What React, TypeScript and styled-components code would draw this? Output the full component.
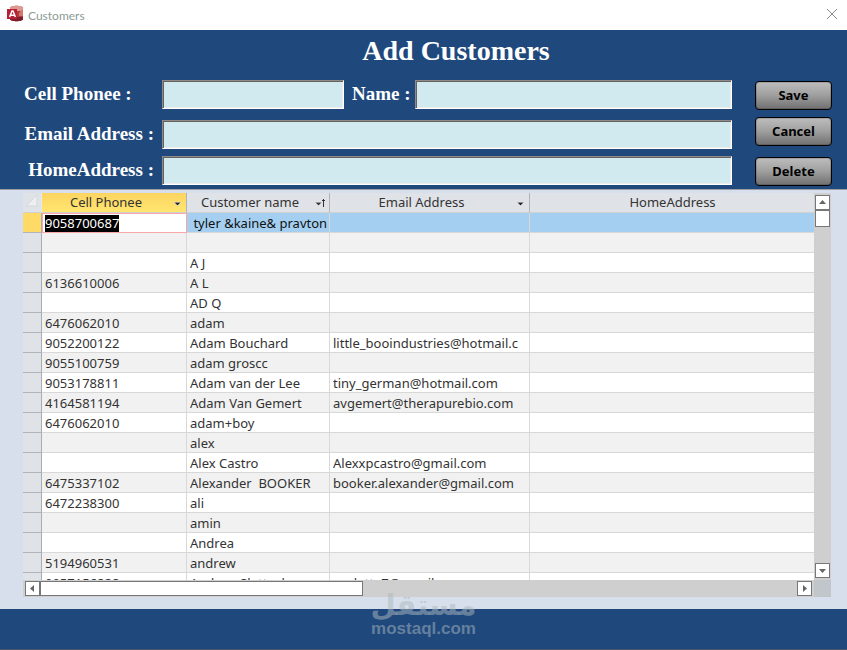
import React from "react";
import styled, { createGlobalStyle, css } from "styled-components";

const navy = "#1f497d";
const uiFont = '"Noto Sans", "Open Sans", sans-serif';
const serifFont = '"Liberation Serif", "Times New Roman", serif';

const GlobalStyle = createGlobalStyle`
  * { box-sizing: border-box; }
  body { margin: 0; background: #fff; font-family: ${uiFont}; }
  button, input { font: inherit; margin: 0; }
`;

const Window = styled.div`
  position: relative;
  display: flex;
  flex-direction: column;
  height: 100vh;
  overflow: hidden;
`;

const TitleBar = styled.div`
  display: flex;
  align-items: center;
  gap: 4px;
  flex: 0 0 30px;
  padding: 0 9px 2px 6px;
  background: #fff;
  color: #8d9a94;
  font-family: Lato, ${uiFont};
  font-size: 12px;
`;

const WindowTitle = styled.span`
  flex: 1;
  padding-top: 2px;
`;

const CloseButton = styled.button`
  display: flex;
  padding: 0;
  border: 0;
  background: none;
`;

const FormHeader = styled.form`
  flex: none;
  padding: 0 15px 3px 24px;
  background: ${navy};
  color: #fff;
  font-family: ${serifFont};
  font-weight: bold;
`;

const Heading = styled.h1`
  margin: 0;
  padding: 4px 0 12px 56px;
  font-size: 28px;
  line-height: 34px;
  text-align: center;
`;

const FormBody = styled.div`
  display: flex;
  gap: 23px;
`;

const Fields = styled.div`
  flex: 1;
  display: grid;
  grid-template-columns: 130px 1fr;
  grid-template-rows: 29px 40px 36px;
  column-gap: 8px;
  align-items: end;
`;

const Label = styled.label<{ $end?: boolean }>`
  padding-bottom: 2px;
  font-size: 19px;
  line-height: 27px;
  white-space: nowrap;
  text-align: ${(p) => (p.$end ? "right" : "left")};
`;

const FieldPair = styled.div`
  display: grid;
  grid-template-columns: 182px auto minmax(0, 1fr);
  align-items: end;
  column-gap: 4px;
`;

const NameLabel = styled(Label)`
  padding-left: 4px;
`;

const TextField = styled.input`
  width: 100%;
  height: 29px;
  padding: 0 4px;
  border: 1px solid;
  border-color: #8f8b88 #fff #fff #8f8b88;
  border-radius: 0;
  outline: 0;
  background: #d1eaf0;
  box-shadow: inset 1px 1px 0 #66625f, inset -1px -1px 0 #eeecea;
  font-family: ${uiFont};
  font-size: 13px;
`;

const Actions = styled.div`
  display: grid;
  grid-template-rows: 29px 36px 40px;
  align-items: end;
  flex: 0 0 77px;
  padding-top: 1px;
`;

const ActionButton = styled.button`
  height: 29px;
  padding: 0 0 2px;
  border: 1px solid #000;
  border-radius: 4px;
  background: linear-gradient(#bdbdbd, #a2a2a2 45%, #707070);
  box-shadow: inset 0 0 0 1px rgba(0, 0, 0, 0.15);
  color: #000;
  font-family: ${uiFont};
  font-size: 13px;
  font-weight: bold;
`;

const Detail = styled.main`
  flex: 1;
  min-height: 0;
  display: grid;
  grid-template-columns: minmax(0, 1fr) 17px;
  grid-template-rows: minmax(0, 1fr) 17px;
  padding: 3px 16px 12px 23px;
  border-top: 1px solid #9c9ea3;
  background: #d6dfeb;
`;

const SheetView = styled.div`
  overflow: hidden;
  background: #fff;
`;

const Sheet = styled.table`
  width: 100%;
  table-layout: fixed;
  border-collapse: separate;
  border-spacing: 0;
  color: #333;
  font-size: 13px;
`;

const Column = styled.col<{ $width?: number }>`
  width: ${(p) => (p.$width ? `${p.$width}px` : "auto")};
`;

const HeadCell = styled.th<{ $active?: boolean }>`
  height: 20px;
  padding: 0 3px 0 4px;
  border-right: 1px solid #b0b4b8;
  border-bottom: 1px solid #d0d0d0;
  background: ${(p) => (p.$active ? "linear-gradient(#fcd462, #ffe670)" : "#dfe2e7")};
  font-weight: normal;
  line-height: 19px;

  &:last-child {
    border-right: 0;
  }
`;

const CornerCell = styled(HeadCell)`
  border-right: 1px solid #e6e9ee;
  padding: 0 3px 0 0;
`;

const HeadContent = styled.div`
  display: flex;
  align-items: center;
  gap: 6px;
`;

const HeadText = styled.span`
  flex: 1;
  white-space: nowrap;
`;

const MenuButton = styled.button`
  display: flex;
  padding: 0;
  border: 0;
  background: none;
`;

const RowHead = styled.th<{ $active?: boolean }>`
  padding: 0;
  border-right: 1px solid #a8adb2;
  border-bottom: 1px solid #b0b4b8;
  background: ${(p) => (p.$active ? "#ffda66" : "#dfe2e7")};
`;

const Cell = styled.td<{ $editing?: boolean }>`
  height: 20px;
  padding: 0 1px 0 3px;
  border-right: 1px solid #d8d8d8;
  border-bottom: 1px solid #d8d8d8;

  &:last-child {
    border-right: 0;
  }

  ${(p) =>
    p.$editing &&
    css`
      background: #fff;
      border-color: #f9a7ab;
      box-shadow: inset 1px 1px 0 #f9a7ab;
    `}
`;

const CellText = styled.div`
  height: 19px;
  padding-top: 2px;
  overflow: hidden;
  line-height: 17px;
  white-space: pre;
`;

const Row = styled.tr<{ $active?: boolean }>`
  background: #fff;
  color: ${(p) => (p.$active ? "#111" : "#333")};

  &:nth-child(even) {
    background: #f1f1f1;
  }

  ${(p) =>
    p.$active &&
    css`
      background: #a5cff0;
    `}
`;

const Selection = styled.span`
  display: inline-block;
  background: #000;
  color: #fff;
`;

const ScrollTrack = styled.div<{ $vertical?: boolean }>`
  display: flex;
  flex-direction: ${(p) => (p.$vertical ? "column" : "row")};
  padding: ${(p) => (p.$vertical ? "2px 1px" : "1px 2px")};
  background: #cfcfcf;
`;

const ArrowButton = styled.button`
  display: flex;
  align-items: center;
  justify-content: center;
  flex: none;
  width: 15px;
  height: 15px;
  padding: 0;
  border: 1px solid #777;
  background: #fff;
`;

const ScrollThumb = styled.div<{ $vertical?: boolean }>`
  flex: ${(p) => (p.$vertical ? "0 0 17px" : "0 0 41%")};
  border: 1px solid #777;
  background: #fff;
`;

const Spacer = styled.div`
  flex: 1;
`;

const ScrollCorner = styled.div`
  background: #c0c6ca;
`;

const FormFooter = styled.footer`
  flex: 0 0 41px;
  border-bottom: 1px solid #4a5568;
  background: ${navy};
`;

const Watermark = styled.div`
  position: absolute;
  bottom: 11px;
  left: 50%;
  transform: translateX(-50%);
  display: flex;
  flex-direction: column;
  align-items: center;
  color: rgba(173, 184, 190, 0.5);
  font-family: "Liberation Sans", Arial, sans-serif;
  font-size: 17px;
  font-weight: bold;
  line-height: 20px;
  pointer-events: none;
`;

const WatermarkLogo = styled.span`
  font-family: "DejaVu Sans", sans-serif;
  font-size: 29px;
  line-height: 28px;
`;

const AccessIcon = () => (
  <svg width="18" height="18" viewBox="0 0 18 18" aria-hidden="true">
    <path d="M4 3c0-3 13-3 13 0v11c0 3-13 3-13 0z" fill="#b53a3f" />
    <path d="M4 3c0-3 13-3 13 0v3H4z" fill="#dc9a92" />
    <path d="M13 8l4-4v7h-4z" fill="#cf7a68" />
    <path d="M4 12h13v2c0 3-13 3-13 0z" fill="#7b1f2b" />
    <rect x="1" y="4" width="10" height="10" fill="#b71f33" />
    <path d="M3.6 12 6 6h1l2.4 6M4.6 10.2h3.8" stroke="#fff" strokeWidth="1.5" fill="none" />
  </svg>
);

const CloseIcon = () => (
  <svg width="12" height="12" viewBox="0 0 12 12" aria-hidden="true">
    <path d="M1 1l10 10M11 1L1 11" stroke="#888" strokeWidth="1" />
  </svg>
);

const DropArrow = ({ sorted = false }: { sorted?: boolean }) => (
  <svg width="11" height="10" viewBox="0 0 11 10" shapeRendering="crispEdges" aria-hidden="true">
    {sorted ? (
      <>
        <path d="M0 4h7l-3.5 4z" fill="#333" stroke="#fff" strokeWidth="0.5" />
        <path d="M8 1h1v8H8zM7 2h3v1H7z" fill="#333" />
      </>
    ) : (
      <path d="M2 4h7l-3.5 4z" fill="#222" stroke="#fff" strokeWidth="0.5" />
    )}
  </svg>
);

const arrowPaths = {
  up: "M1 6h7L4.5 2z",
  down: "M1 3h7L4.5 7z",
  left: "M6 1v7L2 4.5z",
  right: "M3 1v7l4-3.5z",
};

const ScrollArrow = ({ dir }: { dir: keyof typeof arrowPaths }) => (
  <ArrowButton type="button" aria-label={`Scroll ${dir}`}>
    <svg width="9" height="9" viewBox="0 0 9 9" aria-hidden="true">
      <path d={arrowPaths[dir]} fill="#666" />
    </svg>
  </ArrowButton>
);

const customers: [string, string, string][] = [
  ["9058700687", " tyler &kaine& pravton", ""],
  ["", "", ""],
  ["", "A J", ""],
  ["6136610006", "A L", ""],
  ["", "AD Q", ""],
  ["6476062010", "adam", ""],
  ["9052200122", "Adam Bouchard", "little_booindustries@hotmail.c"],
  ["9055100759", "adam groscc", ""],
  ["9053178811", "Adam van der Lee", "tiny_german@hotmail.com"],
  ["4164581194", "Adam Van Gemert", "avgemert@therapurebio.com"],
  ["6476062010", "adam+boy", ""],
  ["", "alex", ""],
  ["", "Alex Castro", "Alexxpcastro@gmail.com"],
  ["6475337102", "Alexander  BOOKER", "booker.alexander@gmail.com"],
  ["6472238300", "ali", ""],
  ["", "amin", ""],
  ["", "Andrea", ""],
  ["5194960531", "andrew", ""],
  ["9057156828", "Andrew Slattock", "aaslatte7@gmail"],
];

export default function App() {
  return (
    <Window>
      <GlobalStyle />
      <TitleBar>
        <AccessIcon />
        <WindowTitle>Customers</WindowTitle>
        <CloseButton type="button" aria-label="Close">
          <CloseIcon />
        </CloseButton>
      </TitleBar>

      <FormHeader onSubmit={(e) => e.preventDefault()}>
        <Heading>Add Customers</Heading>
        <FormBody>
          <Fields>
            <Label htmlFor="phone">Cell Phonee :</Label>
            <FieldPair>
              <TextField id="phone" />
              <NameLabel htmlFor="name">Name :</NameLabel>
              <TextField id="name" />
            </FieldPair>
            <Label htmlFor="email" $end>Email Address :</Label>
            <TextField id="email" />
            <Label htmlFor="address" $end>HomeAddress :</Label>
            <TextField id="address" />
          </Fields>
          <Actions>
            <ActionButton type="submit">Save</ActionButton>
            <ActionButton type="button">Cancel</ActionButton>
            <ActionButton type="button">Delete</ActionButton>
          </Actions>
        </FormBody>
      </FormHeader>

      <Detail>
        <SheetView>
          <Sheet>
            <colgroup>
              <Column $width={19} />
              <Column $width={145} />
              <Column $width={143} />
              <Column $width={200} />
              <Column />
            </colgroup>
            <thead>
              <tr>
                <CornerCell aria-label="Select all">
                  <svg width="14" height="14" viewBox="0 0 14 14" aria-hidden="true">
                    <path d="M2 13L13 2v11z" fill="#eceef0" stroke="#c6cace" strokeWidth="0.5" />
                  </svg>
                </CornerCell>
                <HeadCell $active scope="col">
                  <HeadContent>
                    <HeadText>Cell Phonee</HeadText>
                    <MenuButton type="button" aria-label="Filter Cell Phonee"><DropArrow /></MenuButton>
                  </HeadContent>
                </HeadCell>
                <HeadCell scope="col">
                  <HeadContent>
                    <HeadText>Customer name</HeadText>
                    <MenuButton type="button" aria-label="Sort Customer name"><DropArrow sorted /></MenuButton>
                  </HeadContent>
                </HeadCell>
                <HeadCell scope="col">
                  <HeadContent>
                    <HeadText>Email Address</HeadText>
                    <MenuButton type="button" aria-label="Filter Email Address"><DropArrow /></MenuButton>
                  </HeadContent>
                </HeadCell>
                <HeadCell scope="col">HomeAddress</HeadCell>
              </tr>
            </thead>
            <tbody>
              {customers.map(([phone, name, email], i) => (
                <Row key={i} $active={i === 0}>
                  <RowHead scope="row" $active={i === 0} aria-label={`Record ${i + 1}`} />
                  <Cell $editing={i === 0}>
                    <CellText>{i === 0 ? <Selection>{phone}</Selection> : phone}</CellText>
                  </Cell>
                  <Cell><CellText>{name}</CellText></Cell>
                  <Cell><CellText>{email}</CellText></Cell>
                  <Cell />
                </Row>
              ))}
            </tbody>
          </Sheet>
        </SheetView>
        <ScrollTrack $vertical>
          <ScrollArrow dir="up" />
          <ScrollThumb $vertical />
          <Spacer />
          <ScrollArrow dir="down" />
        </ScrollTrack>
        <ScrollTrack>
          <ScrollArrow dir="left" />
          <ScrollThumb />
          <Spacer />
          <ScrollArrow dir="right" />
        </ScrollTrack>
        <ScrollCorner />
      </Detail>

      <FormFooter />
      <Watermark>
        <WatermarkLogo lang="ar">مستقل</WatermarkLogo>
        <span>mostaql.com</span>
      </Watermark>
    </Window>
  );
}
